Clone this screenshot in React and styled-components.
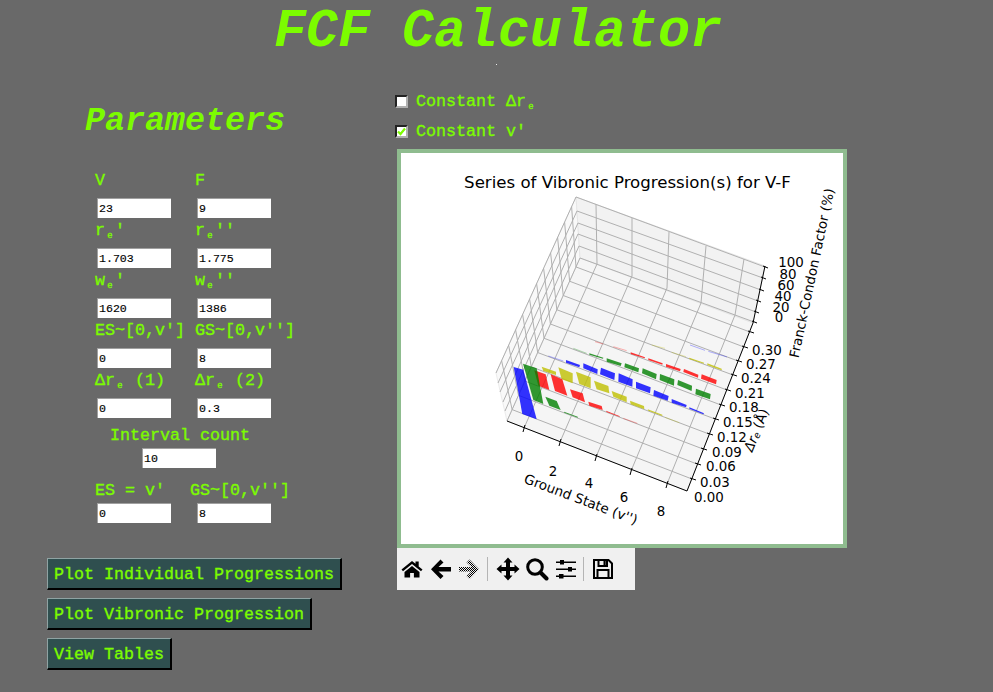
import styled, { createGlobalStyle } from "styled-components";

const GlobalStyle = createGlobalStyle`
  html, body {
    margin: 0;
    padding: 0;
    background: #696969;
  }
`;

const Page = styled.div`
  width: 993px;
  height: 692px;
  overflow: hidden;
  background: #696969;
  color: #7cfc00;
  font-family: "Liberation Mono", monospace;
  font-size: 16.67px;
  font-weight: normal;
  -webkit-text-stroke: 0.35px #7cfc00;
`;
const Header = styled.header`
  height: 72px;
  display: flex;
  flex-direction: column;
  align-items: center;
`;
const Title = styled.h1`
  margin: 0;
  height: 64px;
  line-height: 64px;
  font-size: 53.33px;
  font-style: italic;
  font-weight: bold;
  padding-left: 3px;
  -webkit-text-stroke: 0;
`;
const Dot = styled.div`
  width: 1px;
  height: 1px;
  background: #e8e8e8;
`;
const Main = styled.main`
  display: flex;
`;
const LeftPanel = styled.section`
  width: 395px;
  flex: none;
`;
const Heading = styled.h2`
  margin: 29px 0 27px;
  padding-left: 85px;
  height: 40px;
  line-height: 40px;
  font-size: 33.33px;
  font-style: italic;
  font-weight: bold;
  -webkit-text-stroke: 0;
`;
const FieldGrid = styled.div`
  display: grid;
  grid-template-columns: 100px 100px;
  padding-left: 95px;
`;
const Field = styled.div`
  display: flex;
  flex-direction: column;
`;
const Label = styled.label`
  height: 30px;
  line-height: 25px;
  white-space: pre;
  ${(p) => p.$last && "height: 35px; padding-top: 10px; box-sizing: border-box;"}
  ${(p) => p.$shift && "margin-left: -5px;"}
`;
const Sub = styled.span`
  display: inline-block;
  width: 10px;
  font-size: 13px;
  line-height: 1;
  vertical-align: -2px;
  text-align: center;
`;
const Input = styled.input`
  box-sizing: border-box;
  width: 74px;
  height: 20px;
  margin: 0 0 0 2px;
  padding: 1px 0 1px 1px;
  border-style: solid;
  border-width: 1px 0 0 1px;
  border-color: #a0a0a0;
  border-radius: 0;
  outline: none;
  background: #fff;
  color: #000;
  font-family: "Liberation Mono", monospace;
  font-size: 11.6px;
  line-height: 18px;
  -webkit-text-stroke: 0.15px #000;
`;
const IntervalField = styled.div`
  width: 170px;
  margin-left: 95px;
  display: flex;
  flex-direction: column;
  align-items: center;
`;
const IntervalLabel = styled.label`
  height: 30px;
  box-sizing: border-box;
  padding-top: 5px;
  line-height: 25px;
`;
const IntervalInput = styled(Input)`
  margin: 0 2px 0 0;
`;
const ButtonStack = styled.div`
  display: flex;
  flex-direction: column;
  align-items: flex-start;
  gap: 8px;
  margin: 35px 0 0 47px;
`;
const ActionButton = styled.button`
  box-sizing: border-box;
  height: 32px;
  padding: 1px 6px 0;
  border-style: solid;
  border-width: 1px 2px 2px 1px;
  border-color: #8fa3a3 #000 #000 #8fa3a3;
  border-radius: 0;
  background: #2f4f4f;
  color: #7cfc00;
  font-family: "Liberation Mono", monospace;
  font-size: 16.67px;
  font-weight: normal;
  white-space: pre;
  -webkit-text-stroke: 0.35px #7cfc00;
`;
const RightPanel = styled.section`
  display: flex;
  flex-direction: column;
  padding-top: 14px;
`;
const CheckRow = styled.div`
  height: 30px;
  display: flex;
  align-items: center;
  gap: 8px;
`;
const CheckBox = styled.span`
  box-sizing: border-box;
  width: 13px;
  height: 13px;
  display: block;
  border-style: solid;
  border-width: 2px;
  border-color: #222 #b0b0b0 #b0b0b0 #222;
  background: #fff;
`;
const CheckMark = styled.svg`
  display: block;
  width: 9px;
  height: 9px;
`;
const Figure = styled.div`
  margin: 3px 0 0 2px;
  width: 450px;
  height: 399px;
  box-sizing: border-box;
  border: 4px solid #8fbc8f;
  background: #fff;
`;
const Plot = styled.svg`
  display: block;
  width: 442px;
  height: 391px;
  font-family: "DejaVu Sans", sans-serif;
  font-weight: normal;
  -webkit-text-stroke: 0;
`;
const Toolbar = styled.div`
  margin-left: 2px;
  width: 238px;
  height: 42px;
  display: flex;
  align-items: center;
  background: #f0f0f0;
`;
const ToolButton = styled.div`
  width: ${(p) => p.$w || 29}px;
  display: flex;
  justify-content: center;
`;
const ToolIcon = styled.svg`
  display: block;
  width: 24px;
  height: 24px;
`;
const ToolSep = styled.div`
  width: 1px;
  height: 24px;
  margin: 0 ${(p) => p.$r || 4}px 0 ${(p) => p.$l || 4}px;
  background: #b4b4b4;
`;

const lerp = (a, b, t) => [a[0] + (b[0] - a[0]) * t, a[1] + (b[1] - a[1]) * t];

// pixel places read off the reference
const xFront = [[524, 428], [560, 442], [596, 457], [631, 471], [667, 484]];
const xBack = [[597, 264], [632, 276], [667, 288], [701, 303], [735, 315]];
const xTop = [[596, 204], [632, 218], [669, 232], [706, 246], [744, 259]];
const yRight = [[692, 479], [697, 464], [703, 449], [709, 434], [715, 419], [721, 405], [727, 390], [733, 375], [738, 361], [744, 347], [750, 332]];
const zRight = [[754, 322], [756, 312], [758, 301], [761, 290], [763, 278], [765, 267]];
const zBack = [[580, 258], [579, 246], [578, 234], [578, 223], [577, 211], [576, 197]];
const zFront = [[507, 421], [505, 411], [503, 402], [500, 392], [498, 383], [496, 373]];
const yTicks = yRight.map((_, i) => 0.07 + 0.0875 * i);
const floorLeft = (t) => lerp([507, 421], [580, 258], t);
const wallTop = (t) => lerp([496, 373], [576, 197], t);

const xLabels = [[519, 456, "0"], [553, 471, "2"], [589, 483, "4"], [624, 497, "6"], [661, 511, "8"]];
const yLabels = ["0.00", "0.03", "0.06", "0.09", "0.12", "0.15", "0.18", "0.21", "0.24", "0.27", "0.30"];
const yLabelAt = [[709, 497], [715, 482], [721, 466], [727, 452], [732, 437], [738, 422], [744, 407], [750, 393], [756, 378], [761, 364], [767, 350]];
const zLabels = [[779, 317, "0"], [781, 307, "20"], [783, 296, "40"], [786, 285, "60"], [788, 274, "80"], [791, 262, "100"]];

// bar faces in 3x crop coordinates, back rows first
const BLUE = "#0000ff";
const GREEN = "#008000";
const RED = "#ff0000";
const YELLOW = "#bfbf00";

const faint = [
  [BLUE, "600,15 645,31"], [BLUE, "655,34 711,51"],
  [YELLOW, "485,15 525,25"], [YELLOW, "545,37 588,50"],
  [RED, "315,5 340,12"], [RED, "370,20 410,32"],
  [GREEN, "250,25 290,40"], [BLUE, "175,48 220,63"],
  [RED, "400,235 442,250"], [YELLOW, "525,232 568,248"],
];

const bars = [
  [YELLOW, ["598,53 642,68 642,71 598,57", "652,70 695,86 695,91 652,75"]],
  [RED, ["422,37 465,52 464,55 422,42", "475,55 518,70 517,74 475,60", "528,72 572,87 570,94 528,80", "582,87 625,104 624,113 580,96", "635,103 680,120 678,133 633,116"]],
  [GREEN, ["298,40 340,53 339,56 298,44", "350,55 395,70 392,78 350,65", "405,70 447,85 445,97 403,82", "458,85 500,102 498,118 456,100", "510,102 553,118 552,137 509,120", "564,120 606,137 605,153 562,135", "618,146 662,162 660,178 616,163"]],
  [BLUE, ["228,60 270,75 268,82 228,68", "280,70 323,88 322,102 280,85", "333,83 375,100 373,120 330,103", "386,100 428,118 427,140 385,125", "438,125 482,142 480,160 438,145", "492,150 536,168 533,182 490,167", "545,177 590,195 588,202 545,188", "598,202 642,220 640,223 598,206"]],
  [YELLOW, ["155,80 198,95 198,105 160,93", "205,82 248,100 248,130 215,118", "258,95 302,112 302,145 268,132", "312,122 355,138 358,160 320,148", "365,153 410,170 410,187 370,170", "420,182 462,198 463,208 422,193", "473,208 517,224 517,228 475,212"]],
  [RED, ["133,91 167,103 178,150 145,137", "182,103 217,118 232,167 195,153", "240,148 278,160 285,187 248,172", "295,185 335,198 338,210 298,197", "348,212 388,228 390,231 350,216"]],
  [GREEN, ["99,71 140,85 160,192 130,180", "166,170 200,183 212,210 178,197", "222,215 263,230 264,233 223,218"]],
  [BLUE, ["71,81 100,89 140,238 97,222"]],
];

const Line = ({ a, b, color = "#b0b0b0", w = 1 }) => (
  <line x1={a[0]} y1={a[1]} x2={b[0]} y2={b[1]} stroke={color} strokeWidth={w} />
);

const Chart = () => (
  <Plot viewBox="401 153 442 391">
    <polygon points="496,373 576,197 580,258 507,421" fill="#f9f9f9" stroke="#ececec" />
    <polygon points="576,197 765,266 753,323 580,258" fill="#f2f2f2" stroke="#e6e6e6" />
    <polygon points="580,258 753,323 687,491 507,421" fill="#f5f5f5" stroke="#e6e6e6" />

    {xBack.map((p, i) => <Line key={i} a={xTop[i]} b={p} />)}
    {zBack.map((p, i) => <Line key={i} a={p} b={zRight[i]} />)}
    {zBack.map((p, i) => <Line key={i} a={p} b={zFront[i]} />)}
    {yTicks.map((t, i) => <Line key={i} a={floorLeft(t)} b={wallTop(t)} />)}
    {xFront.map((p, i) => <Line key={i} a={p} b={xBack[i]} />)}
    {yTicks.map((t, i) => <Line key={i} a={floorLeft(t)} b={yRight[i]} />)}

    <g transform="translate(490 340) scale(0.33333)">
      {faint.map(([color, pts], i) => (
        <polyline key={i} points={pts} stroke={color} strokeWidth="3" strokeOpacity="0.3" fill="none" />
      ))}
      {bars.map(([color, faces], i) =>
        faces.map((pts, j) => <polygon key={`${i}-${j}`} points={pts} fill={color} fillOpacity="0.8" />)
      )}
    </g>

    <Line a={[507, 421]} b={[687, 491]} color="#000" />
    <Line a={[687, 491]} b={[753, 323]} color="#000" />
    <Line a={[753, 323]} b={[765, 266]} color="#000" />
    {xFront.map((p, i) => <Line key={i} a={[p[0] + 1, p[1] - 3]} b={[p[0] - 1, p[1] + 4]} color="#000" />)}
    {yRight.map((p, i) => <Line key={i} a={[p[0] - 2, p[1] - 1]} b={[p[0] + 4, p[1] + 1]} color="#000" />)}
    {zRight.map((p, i) => <Line key={i} a={[p[0] - 2, p[1] - 1]} b={[p[0] + 3, p[1] + 1]} color="#000" />)}

    <text x="627.5" y="182" fontSize="16.6" textAnchor="middle" dominantBaseline="central">
      Series of Vibronic Progression(s) for V-F
    </text>
    {xLabels.map(([x, y, s]) => (
      <text key={s} x={x} y={y} fontSize="13.4" textAnchor="middle" dominantBaseline="central">{s}</text>
    ))}
    {yLabelAt.map(([x, y], i) => (
      <text key={i} x={x} y={y} fontSize="13.4" textAnchor="middle" dominantBaseline="central">{yLabels[i]}</text>
    ))}
    {zLabels.map(([x, y, s]) => (
      <text key={s} x={x} y={y} fontSize="13.4" textAnchor="middle" dominantBaseline="central">{s}</text>
    ))}
    <text x="581" y="499" fontSize="13.5" textAnchor="middle" dominantBaseline="central" transform="rotate(20.6 581 499)">
      Ground State (v'')
    </text>
    <text x="812" y="273" fontSize="13.4" textAnchor="middle" dominantBaseline="central" transform="rotate(-78 812 273)">
      Franck-Condon Factor (%)
    </text>
    <text x="756" y="430" fontSize="13.5" textAnchor="middle" dominantBaseline="central" transform="rotate(-68 756 430)">
      <tspan fontStyle="italic">Δr</tspan>
      <tspan fontSize="9.5" dy="2" fontStyle="italic">e</tspan>
      <tspan dy="-2"> (Å)</tspan>
    </text>
  </Plot>
);

const HomeIcon = () => (
  <ToolIcon viewBox="0 0 24 24">
    <path d="M1.5 12.5 12 4l3.5 2.8V4.5h3.2v5l3.8 3-1.5 1.7L12 7 3 14.2Z" />
    <path d="M4.5 15 12 9l7.5 6v5.5h-5.6V16h-3.8v4.5H4.5Z" />
  </ToolIcon>
);
const BackIcon = () => (
  <ToolIcon viewBox="0 0 24 24">
    <path d="M11.5 2.5 14.5 5.5 9.5 10H22v4.5H9.5l5 4.5-3 3L2 12.2Z" />
  </ToolIcon>
);
const ForwardIcon = () => (
  <ToolIcon viewBox="0 0 24 24">
    <defs>
      <pattern id="dither" width="2" height="2" patternUnits="userSpaceOnUse">
        <rect width="2" height="2" fill="#f0f0f0" />
        <rect width="1" height="1" fill="#000" />
        <rect x="1" y="1" width="1" height="1" fill="#000" />
      </pattern>
    </defs>
    <path d="M12.5 2.5 9.5 5.5l5 4.5H2v4.5h12.5l-5 4.5 3 3L22 12.2Z" fill="url(#dither)" />
  </ToolIcon>
);
const MoveIcon = () => (
  <ToolIcon viewBox="0 0 24 24">
    <path d="M12 .5 16.5 5.5H14v4.5h4.5V7.5L23.5 12l-5 4.5V14H14v4.5h2.5L12 23.5l-4.5-5H10V14H5.5v2.5L.5 12l5-4.5V10H10V5.5H7.5Z" />
  </ToolIcon>
);
const ZoomIcon = () => (
  <ToolIcon viewBox="0 0 24 24">
    <circle cx="10" cy="10" r="7.3" fill="none" stroke="#000" strokeWidth="3" />
    <line x1="15.5" y1="15.5" x2="21.5" y2="21.5" stroke="#000" strokeWidth="4" strokeLinecap="round" />
  </ToolIcon>
);
const SlidersIcon = () => (
  <ToolIcon viewBox="0 0 24 24">
    <path d="M2 4.5h20v1.4H2ZM2 11.5h20v1.4H2ZM2 18.5h20v1.4H2Z" />
    <path d="M6 3h4v4.5H6ZM14 10h4v4.5h-4ZM5 17h4.5v4.5H5Z" />
  </ToolIcon>
);
const SaveIcon = () => (
  <ToolIcon viewBox="0 0 24 24">
    <path d="M3 3h14.5L21 6.5V21H3Z M7.5 3v6h8.5V3 M6.5 21v-8h11v8" fill="none" stroke="#000" strokeWidth="2" />
    <path d="M12.5 4h2.2v4h-2.2Z" />
  </ToolIcon>
);

const re = (
  <>
    r<Sub>ₑ</Sub>
  </>
);
const we = (
  <>
    w<Sub>ₑ</Sub>
  </>
);

const fields = [
  [["V", "23"], ["F", "9"]],
  [[<>{re}'</>, "1.703"], [<>{re}''</>, "1.775"]],
  [[<>{we}'</>, "1620"], [<>{we}''</>, "1386"]],
  [["ES~[0,v']", "0"], ["GS~[0,v'']", "8"]],
  [[<>Δ{re} (1)</>, "0"], [<>Δ{re} (2)</>, "0.3"]],
];

const App = () => (
  <Page>
    <GlobalStyle />
    <Header>
      <Title>FCF Calculator</Title>
      <Dot />
    </Header>
    <Main>
      <LeftPanel>
        <Heading>Parameters</Heading>
        <FieldGrid>
          {fields.flat().map(([label, value], i) => (
            <Field key={i}>
              <Label>{label}</Label>
              <Input defaultValue={value} />
            </Field>
          ))}
        </FieldGrid>
        <IntervalField>
          <IntervalLabel>Interval count</IntervalLabel>
          <IntervalInput defaultValue="10" />
        </IntervalField>
        <FieldGrid>
          <Field>
            <Label $last>ES = v'</Label>
            <Input defaultValue="0" />
          </Field>
          <Field>
            <Label $last $shift>GS~[0,v'']</Label>
            <Input defaultValue="8" />
          </Field>
        </FieldGrid>
        <ButtonStack>
          <ActionButton>Plot Individual Progressions</ActionButton>
          <ActionButton>Plot Vibronic Progression</ActionButton>
          <ActionButton>View Tables</ActionButton>
        </ButtonStack>
      </LeftPanel>
      <RightPanel>
        <CheckRow>
          <CheckBox />
          <span>Constant Δ{re}</span>
        </CheckRow>
        <CheckRow>
          <CheckBox>
            <CheckMark viewBox="0 0 9 9">
              <path d="M1 4.5 3.5 7 8 1.5" fill="none" stroke="#7cfc00" strokeWidth="2.2" />
            </CheckMark>
          </CheckBox>
          <span>Constant v'</span>
        </CheckRow>
        <Figure>
          <Chart />
        </Figure>
        <Toolbar>
          <ToolButton><HomeIcon /></ToolButton>
          <ToolButton><BackIcon /></ToolButton>
          <ToolButton $w={28}><ForwardIcon /></ToolButton>
          <ToolSep $r={5} />
          <ToolButton><MoveIcon /></ToolButton>
          <ToolButton><ZoomIcon /></ToolButton>
          <ToolButton><SlidersIcon /></ToolButton>
          <ToolSep $l={3} />
          <ToolButton><SaveIcon /></ToolButton>
        </Toolbar>
      </RightPanel>
    </Main>
  </Page>
);

export default App;
